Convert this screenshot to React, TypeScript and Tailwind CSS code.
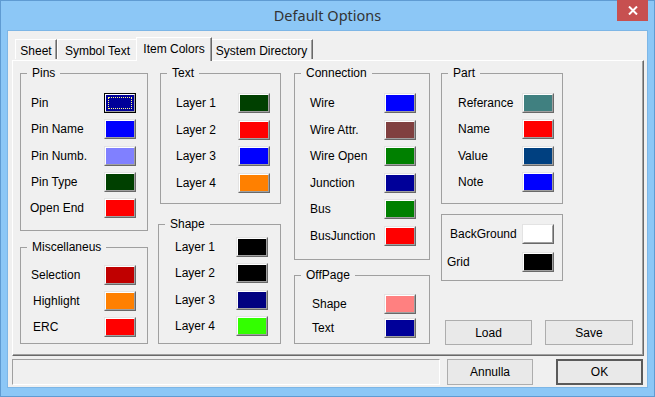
import React from 'react';

type Row = { label: string; bg: string; pl: string; focused?: boolean };

interface GroupProps {
  title?: string;
  rows: Row[];
  box: string;
  cols: string;
  gap: string;
  pt: string;
}

const Swatch: React.FC<{ bg: string; focused?: boolean }> = ({ bg, focused }) => (
  <div
    className={`h-[20px] w-[32px] border ${
      focused
        ? 'border-black'
        : 'border-t-[#e3e3e3] border-l-[#e3e3e3] border-r-[#696969] border-b-[#696969]'
    }`}
  >
    <div className="h-full w-full border border-t-white border-l-white border-r-[#a0a0a0] border-b-[#a0a0a0]">
      <div
        className={`h-full w-full ${bg} ${
          focused ? 'outline-1 outline-dotted outline-[#ffff80] outline-offset-[-3px]' : ''
        }`}
      />
    </div>
  </div>
);

const Group: React.FC<GroupProps> = ({ title, rows, box, cols, gap, pt }) => (
  <fieldset className={`border border-[#a0a0a0] ${box}`}>
    {title && <legend className="ml-[6px] px-[5px] leading-[14px]">{title}</legend>}
    <div className={`flex flex-col ${gap} ${pt}`}>
      {rows.map((r) => (
        <div key={r.label} className={`grid ${cols} h-[20px] items-center`}>
          <span className={`${r.pl} leading-[14px] whitespace-nowrap`}>{r.label}</span>
          <Swatch bg={r.bg} focused={r.focused} />
        </div>
      ))}
    </div>
  </fieldset>
);

const pins: Row[] = [
  { label: 'Pin', bg: 'bg-[#000099]', pl: 'pl-[10px]', focused: true },
  { label: 'Pin Name', bg: 'bg-[#0000ff]', pl: 'pl-[10px]' },
  { label: 'Pin Numb.', bg: 'bg-[#8080ff]', pl: 'pl-[10px]' },
  { label: 'Pin Type', bg: 'bg-[#004000]', pl: 'pl-[10px]' },
  { label: 'Open End', bg: 'bg-[#ff0000]', pl: 'pl-[9px]' },
];

const misc: Row[] = [
  { label: 'Selection', bg: 'bg-[#c00000]', pl: 'pl-[10px]' },
  { label: 'Highlight', bg: 'bg-[#ff8000]', pl: 'pl-[12px]' },
  { label: 'ERC', bg: 'bg-[#ff0000]', pl: 'pl-[12px]' },
];

const textLayers: Row[] = [
  { label: 'Layer 1', bg: 'bg-[#004000]', pl: 'pl-[15px]' },
  { label: 'Layer 2', bg: 'bg-[#ff0000]', pl: 'pl-[15px]' },
  { label: 'Layer 3', bg: 'bg-[#0000ff]', pl: 'pl-[15px]' },
  { label: 'Layer 4', bg: 'bg-[#ff8000]', pl: 'pl-[15px]' },
];

const shapeLayers: Row[] = [
  { label: 'Layer 1', bg: 'bg-[#000000]', pl: 'pl-[16px]' },
  { label: 'Layer 2', bg: 'bg-[#000000]', pl: 'pl-[16px]' },
  { label: 'Layer 3', bg: 'bg-[#000080]', pl: 'pl-[16px]' },
  { label: 'Layer 4', bg: 'bg-[#33ff00]', pl: 'pl-[16px]' },
];

const connection: Row[] = [
  { label: 'Wire', bg: 'bg-[#0000ff]', pl: 'pl-[15px]' },
  { label: 'Wire Attr.', bg: 'bg-[#804040]', pl: 'pl-[15px]' },
  { label: 'Wire Open', bg: 'bg-[#008000]', pl: 'pl-[15px]' },
  { label: 'Junction', bg: 'bg-[#000099]', pl: 'pl-[15px]' },
  { label: 'Bus', bg: 'bg-[#008000]', pl: 'pl-[15px]' },
  { label: 'BusJunction', bg: 'bg-[#ff0000]', pl: 'pl-[15px]' },
];

const offPage: Row[] = [
  { label: 'Shape', bg: 'bg-[#ff8080]', pl: 'pl-[17px]' },
  { label: 'Text', bg: 'bg-[#000099]', pl: 'pl-[17px]' },
];

const part: Row[] = [
  { label: 'Referance', bg: 'bg-[#408080]', pl: 'pl-[16px]' },
  { label: 'Name', bg: 'bg-[#ff0000]', pl: 'pl-[16px]' },
  { label: 'Value', bg: 'bg-[#004080]', pl: 'pl-[16px]' },
  { label: 'Note', bg: 'bg-[#0000ff]', pl: 'pl-[16px]' },
];

const back: Row[] = [
  { label: 'BackGround', bg: 'bg-[#ffffff]', pl: 'pl-[8px]' },
  { label: 'Grid', bg: 'bg-[#000000]', pl: 'pl-[5px]' },
];

const tabs = ['Sheet', 'Symbol Text', 'Item Colors', 'System Directory'];
const tabWidths = ['w-[42px]', 'w-[81px]', 'w-[76px]', 'w-[103px]'];

const WinButton: React.FC<{ label: string; size: string; primary?: boolean }> = ({ label, size, primary }) => (
  <button
    className={`${size} flex items-center justify-center bg-[#e9e9e9] ${
      primary ? 'border-2 border-[#5a5a5a]' : 'border border-[#adadad]'
    }`}
  >
    {label}
  </button>
);

export default function App() {
  return (
    <div className="w-[655px] h-[397px] flex flex-col bg-[#8cc7f6] border border-[#5f9bd2] text-[12px] text-black font-['Liberation_Sans',Arial,sans-serif]">
      {/* title bar */}
      <div className="h-[29px] grid grid-cols-[1fr_auto_1fr]">
        <div />
        <div className="self-center pt-[1px] text-[14.5px] text-[#333333] font-['Noto_Sans',sans-serif]">Default Options</div>
        <div className="flex justify-end items-start pr-[6px]">
          <div className="-mt-px w-[31px] h-[21px] bg-[#c75050] flex items-center justify-center">
            <svg width="10" height="9" viewBox="0 0 10 9">
              <path d="M1 0.5 L9 8.5 M9 0.5 L1 8.5" stroke="white" strokeWidth="2" />
            </svg>
          </div>
        </div>
      </div>

      {/* client area */}
      <div className="mx-[6px] mb-[8px] flex-1 border border-[#7db6e6] bg-[#f0f0f0] flex flex-col pl-[4px] pr-[3px] pt-[6px]">
        <div className="flex items-end h-[23px] pl-[3px]">
          {tabs.map((t, i) =>
            i === 2 ? (
              <div
                key={t}
                className={`${tabWidths[i]} -mx-[2px] h-[24px] -mb-px relative z-10 bg-[#f0f0f0] border-t border-l border-white border-r border-r-[#696969] shadow-[inset_-1px_0_0_#a0a0a0] flex justify-center pt-[4px] leading-[15px]`}
              >
                {t}
              </div>
            ) : (
              <div
                key={t}
                className={`${tabWidths[i]} h-[20px] mb-px bg-[#f0f0f0] border-t border-l border-white border-r border-r-[#696969] shadow-[inset_-1px_0_0_#a0a0a0] flex justify-center pt-[4px] leading-[15px]`}
              >
                {t}
              </div>
            )
          )}
        </div>

        <div className="h-[296px] border border-t-white border-l-white border-r-[#696969] border-b-[#696969] shadow-[inset_-1px_-1px_0_#a0a0a0] flex pl-[7px] pt-[5px] gap-[10px]">
          <div className="flex flex-col w-[128px]">
            <Group title="Pins" rows={pins} box="h-[165px] w-[128px]" cols="grid-cols-[83px_32px]" gap="gap-[6.3px]" pt="pt-[13px]" />
            <Group title="Miscellaneus" rows={misc} box="mt-[9px] h-[104px] w-[128px]" cols="grid-cols-[83px_32px]" gap="gap-[6px]" pt="pt-[11px]" />
          </div>
          <div className="flex flex-col w-[123px]">
            <Group title="Text" rows={textLayers} box="ml-[2px] h-[138px] w-[121px]" cols="grid-cols-[77px_32px]" gap="gap-[6.67px]" pt="pt-[13px]" />
            <Group title="Shape" rows={shapeLayers} box="mt-[13px] h-[127px] w-[123px]" cols="grid-cols-[77px_32px]" gap="gap-[6.33px]" pt="pt-[6px]" />
          </div>
          <div className="flex flex-col w-[136px] ml-[3px]">
            <Group title="Connection" rows={connection} box="h-[194px] w-[136px]" cols="grid-cols-[89px_32px]" gap="gap-[6.6px]" pt="pt-[13px]" />
            <Group title="OffPage" rows={offPage} box="mt-[8px] h-[76px] w-[136px]" cols="grid-cols-[89px_32px]" gap="gap-[4px]" pt="pt-[12px]" />
          </div>
          <div className="flex flex-col w-[192px] ml-[1px]">
            <Group title="Part" rows={part} box="h-[138px] w-[122px]" cols="grid-cols-[80px_32px]" gap="gap-[6.33px]" pt="pt-[13px]" />
            <Group rows={back} box="mt-[10px] h-[67px] w-[122px]" cols="grid-cols-[80px_32px]" gap="gap-[8px]" pt="pt-[9px]" />
            <div className="mt-[39px] flex gap-[13px] pl-[4px]">
              <WinButton label="Load" size="w-[87px] h-[25px]" />
              <WinButton label="Save" size="w-[88px] h-[25px]" />
            </div>
          </div>
        </div>

        <div className="mt-[3px] flex h-[26px]">
          <div className="w-[428px] h-full border border-t-[#a0a0a0] border-l-[#a0a0a0] border-r-white border-b-white" />
          <div className="ml-[7px]">
            <WinButton label="Annulla" size="w-[86px] h-[26px]" />
          </div>
          <div className="ml-[23px]">
            <WinButton label="OK" size="w-[87px] h-[26px]" primary />
          </div>
        </div>
      </div>
    </div>
  );
}
